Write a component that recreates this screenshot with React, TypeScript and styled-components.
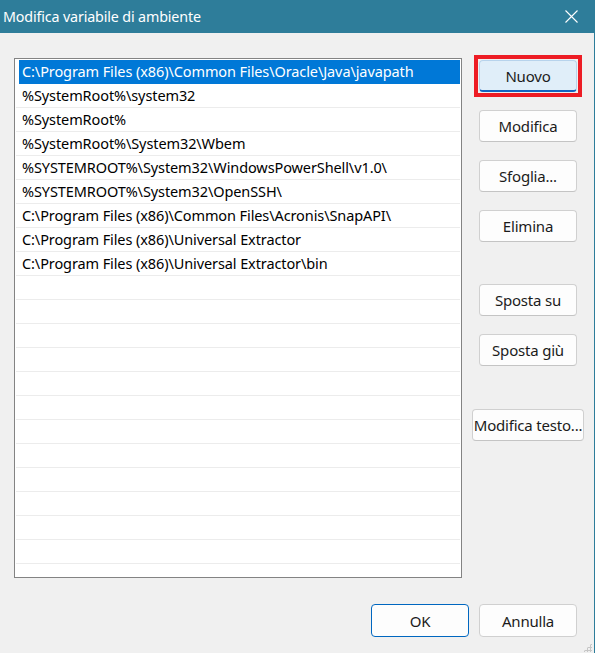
import React from "react";
import styled, { createGlobalStyle } from "styled-components";

const FONT = `"Noto Sans", "Segoe UI", "Liberation Sans", sans-serif`;

const Global = createGlobalStyle`
  html, body { margin: 0; padding: 0; background: #f0f0f0; }
  * { box-sizing: border-box; }
`;

const Window = styled.div`
  width: 595px;
  height: 653px;
  background: #f0f0f0;
  border-right: 1px solid #2d7d9a;
  display: flex;
  flex-direction: column;
  position: relative;
  font-family: ${FONT};
  overflow: hidden;
`;

const TitleBar = styled.div`
  height: 33px;
  background: #2e7d9a;
  color: #ffffff;
  display: flex;
  align-items: center;
  justify-content: space-between;
  padding: 0 16px 1px 3px;
  font-size: 14.3px;
  flex: none;
`;

const Title = styled.span`
  letter-spacing: -0.15px;
`;

const Body = styled.div`
  flex: 1;
  display: flex;
  flex-direction: column;
  padding: 25px 10px 16px 14px;
`;

const Main = styled.div`
  display: flex;
  gap: 10px;
  align-items: flex-start;
`;

const ListBox = styled.div`
  flex: none;
  width: 448px;
  height: 520px;
  background: #ffffff;
  border: 1px solid #838383;
  padding: 1px 1px 0 1px;
  overflow: hidden;
`;

const Row = styled.div<{ $selected?: boolean }>`
  height: 24px;
  margin-left: ${(p) => (p.$selected ? "3px" : "0")};
  padding-left: ${(p) => (p.$selected ? "3px" : "6px")};
  border-bottom: 1px solid ${(p) => (p.$selected ? "#0078d7" : "#ececec")};
  background: ${(p) => (p.$selected ? "#0078d7" : "transparent")};
  color: ${(p) => (p.$selected ? "#ffffff" : "#000000")};
  font-size: 14.5px;
  line-height: 23px;
  white-space: nowrap;
  letter-spacing: -0.1px;
`;

const ButtonColumn = styled.div`
  flex: none;
  width: 112px;
  display: flex;
  flex-direction: column;
  align-items: center;
  padding-top: 2px;
`;

const Btn = styled.button<{ $top?: number; $wide?: boolean; $accent?: boolean }>`
  margin-top: ${(p) => p.$top ?? 0}px;
  width: ${(p) => (p.$wide ? "112px" : "98px")};
  height: 32px;
  background: ${(p) => (p.$accent ? "#e0eef9" : "#fdfdfd")};
  border: 1px solid ${(p) => (p.$accent ? "#b7d3ec" : "#d0d0d0")};
  border-bottom: ${(p) => (p.$accent ? "2px solid #1565c0" : "1px solid #c4c4c4")};
  border-radius: 4px;
  font-family: ${FONT};
  font-size: 15px;
  color: #1b1b1b;
  padding: 0;
  letter-spacing: -0.2px;
  white-space: nowrap;
`;

const Highlight = styled.div`
  position: relative;
  &::after {
    content: "";
    position: absolute;
    inset: -5px;
    border: 4px solid #ed1c24;
    pointer-events: none;
  }
`;

const Footer = styled.div`
  margin-top: 26px;
  padding-right: 7px;
  display: flex;
  justify-content: flex-end;
  gap: 10px;
`;

const FooterBtn = styled.button<{ $default?: boolean }>`
  width: 98px;
  height: 33px;
  background: #fdfdfd;
  border: 1px solid ${(p) => (p.$default ? "#0067c0" : "#d0d0d0")};
  border-radius: 4px;
  font-family: ${FONT};
  font-size: 15px;
  color: #1b1b1b;
  padding: 0;
  letter-spacing: -0.2px;
`;

const Grip = styled.div`
  position: absolute;
  right: 2px;
  bottom: 1px;
  width: 9px;
  height: 9px;
  background:
    radial-gradient(circle, #c6c6c6 1.2px, transparent 1.3px) 0 0 / 3px 3px;
  clip-path: polygon(100% 0, 100% 100%, 0 100%);
`;

const entries = [
  "C:\\Program Files (x86)\\Common Files\\Oracle\\Java\\javapath",
  "%SystemRoot%\\system32",
  "%SystemRoot%",
  "%SystemRoot%\\System32\\Wbem",
  "%SYSTEMROOT%\\System32\\WindowsPowerShell\\v1.0\\",
  "%SYSTEMROOT%\\System32\\OpenSSH\\",
  "C:\\Program Files (x86)\\Common Files\\Acronis\\SnapAPI\\",
  "C:\\Program Files (x86)\\Universal Extractor",
  "C:\\Program Files (x86)\\Universal Extractor\\bin",
];

export default function App() {
  const rows = [...entries, ...Array(14).fill("")];
  return (
    <>
      <Global />
      <Window>
        <TitleBar>
          <Title>Modifica variabile di ambiente</Title>
          <svg width="13" height="13" viewBox="0 0 13 13">
            <path d="M0.5 0.5 L12.5 12.5 M12.5 0.5 L0.5 12.5" stroke="#ffffff" strokeWidth="1.1" />
          </svg>
        </TitleBar>
        <Body>
          <Main>
            <ListBox>
              {rows.map((r, i) => (
                <Row key={i} $selected={i === 0}>
                  {r}
                </Row>
              ))}
            </ListBox>
            <ButtonColumn>
              <Highlight>
                <Btn $accent>Nuovo</Btn>
              </Highlight>
              <Btn $top={18}>Modifica</Btn>
              <Btn $top={18}>Sfoglia...</Btn>
              <Btn $top={18}>Elimina</Btn>
              <Btn $top={42}>Sposta su</Btn>
              <Btn $top={18}>Sposta giù</Btn>
              <Btn $top={43} $wide>
                Modifica testo...
              </Btn>
            </ButtonColumn>
          </Main>
          <Footer>
            <FooterBtn $default>OK</FooterBtn>
            <FooterBtn>Annulla</FooterBtn>
          </Footer>
        </Body>
        <Grip />
      </Window>
    </>
  );
}
